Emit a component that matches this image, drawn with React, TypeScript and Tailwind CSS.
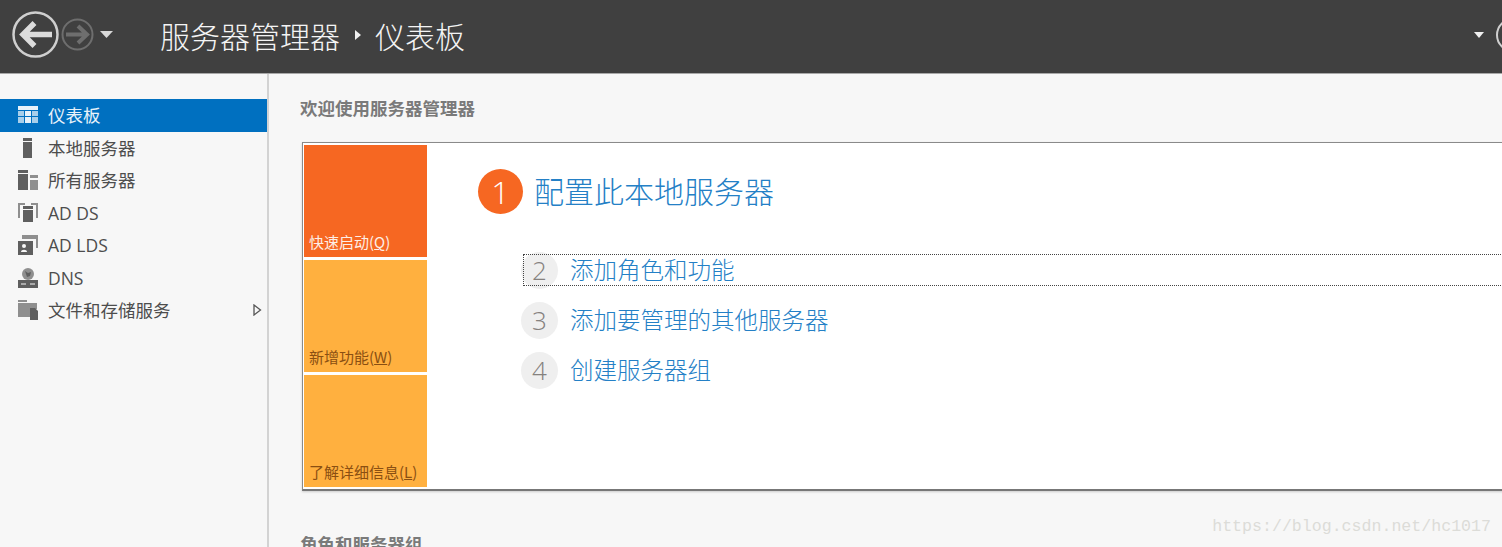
const cjk = "font-['Noto_Sans_CJK_SC','Noto_Sans',sans-serif]";

function Icon({ name }: { name: string }) {
  const c = "#5f5f5f";
  const l = "#8f8f8f";
  if (name === "dash")
    return (
      <svg width="20" height="20" viewBox="0 0 20 20">
        <rect x="0" y="1" width="20" height="4" fill="#e8f2fa" />
        <rect x="0" y="6" width="6" height="5" fill="#a9cfea" />
        <rect x="7" y="6" width="6" height="5" fill="#e8f2fa" />
        <rect x="14" y="6" width="6" height="5" fill="#a9cfea" />
        <rect x="0" y="12" width="6" height="6" fill="#a9cfea" />
        <rect x="7" y="12" width="6" height="6" fill="#e8f2fa" />
        <rect x="14" y="12" width="6" height="6" fill="#a9cfea" />
      </svg>
    );
  if (name === "local")
    return (
      <svg width="20" height="20" viewBox="0 0 20 20">
        <rect x="5" y="0" width="9" height="3" fill={c} />
        <rect x="5" y="4" width="9" height="16" fill={c} />
      </svg>
    );
  if (name === "all")
    return (
      <svg width="20" height="20" viewBox="0 0 20 20">
        <rect x="0" y="0" width="10" height="3" fill={c} />
        <rect x="0" y="4" width="10" height="16" fill={c} />
        <rect x="12" y="5" width="8" height="3" fill={l} />
        <rect x="12" y="10" width="8" height="10" fill={l} />
      </svg>
    );
  if (name === "adds")
    return (
      <svg width="20" height="21" viewBox="0 0 20 21">
        <path d="M0 1h7v2H2v13H0zM13 1h7v15h-2V3h-5z" fill={l} />
        <rect x="5" y="4" width="10" height="3" fill={c} />
        <rect x="5" y="8" width="10" height="12" fill={c} />
      </svg>
    );
  if (name === "adlds")
    return (
      <svg width="20" height="20" viewBox="0 0 20 20">
        <path d="M4 0h16v13h-2V4H4z" fill={l} />
        <rect x="0" y="6" width="15" height="14" fill={c} />
        <circle cx="6" cy="11" r="2" fill="#f7f7f7" />
        <path d="M3 17c0-3 6-3 6 0z" fill="#f7f7f7" />
      </svg>
    );
  if (name === "dns")
    return (
      <svg width="20" height="20" viewBox="0 0 20 20">
        <circle cx="10" cy="6" r="6" fill={l} />
        <path d="M7 3l3 2 3-1-1 4-3 1z" fill={c} />
        <rect x="0" y="12" width="20" height="8" fill={c} />
        <path d="M3 16h5M12 16h5" stroke="#f7f7f7" strokeWidth="1" />
      </svg>
    );
  return (
    <svg width="20" height="20" viewBox="0 0 20 20">
      <path d="M0 0h9v2H0z" fill={l} />
      <path d="M0 3h19v6h-7v8H0z" fill={l} />
      <path d="M12 8h5l3 3v9h-8z" fill={c} />
    </svg>
  );
}

const navItems = [
  { icon: "dash", label: "仪表板", active: true },
  { icon: "local", label: "本地服务器" },
  { icon: "all", label: "所有服务器" },
  { icon: "adds", label: "AD DS" },
  { icon: "adlds", label: "AD LDS" },
  { icon: "dns", label: "DNS" },
  { icon: "files", label: "文件和存储服务", arrow: true },
];

function Tile({ label, hot }: { label: [string, string]; hot?: boolean }) {
  return (
    <div
      className={`h-[112.5px] flex items-end pl-[5px] pb-[5px] text-[15px] leading-5 ${
        hot ? "bg-[#f66722] text-[#fdeee6]" : "bg-[#ffb03f] text-[#8a4f12]"
      }`}
    >
      <span>
        {label[0]}(<span className="underline">{label[1]}</span>)
      </span>
    </div>
  );
}

function Step({ n, text, focus }: { n: number; text: string; focus?: boolean }) {
  return (
    <div className="relative h-[36px] flex items-center">
      {focus && <div className="absolute left-[2px] right-0 top-[2px] h-[32px] border border-dotted border-[#444]" />}
      <div className="w-[37px] h-[37px] rounded-full bg-[#efefef] flex items-center justify-center text-[#85817e] text-[26px] shrink-0 font-['Open_Sans',sans-serif] font-light">
        {n}
      </div>
      <span className="ml-[12px] text-[23.5px] leading-none font-light text-[#2480c6]">{text}</span>
    </div>
  );
}

export default function App() {
  return (
    <div className={`relative w-[1502px] h-[547px] overflow-hidden bg-[#f7f7f7] flex flex-col ${cjk}`}>
      <header className="h-[74px] shrink-0 bg-[#404040] border-b border-[#a8a8a8] flex items-center pb-[4px]">
        <div className="flex items-center pl-[12px] w-[160px] shrink-0">
          <svg width="47" height="47" viewBox="0 0 47 47">
            <circle cx="23.5" cy="23.5" r="22" fill="none" stroke="#cfcfcf" strokeWidth="2.5" />
            <path d="M40 23.5H12M22.500 12L11 23.5 22.500 35" fill="none" stroke="#dcdcdc" strokeWidth="5.5" />
          </svg>
          <svg width="33" height="33" viewBox="0 0 33 33" className="ml-[2px]">
            <circle cx="16.5" cy="16.5" r="15" fill="none" stroke="#6e6e6e" strokeWidth="2" />
            <path d="M5 16.5h21M17 8l9 8.500-9 8.500" fill="none" stroke="#6e6e6e" strokeWidth="4" />
          </svg>
          <svg width="14" height="8" viewBox="0 0 14 8" className="ml-[6px]">
            <path d="M0 0h13L6.500 7z" fill="#d8d8d8" />
          </svg>
        </div>
        <span className="text-[30px] font-light text-[#f4f4f4] leading-none">服务器管理器</span>
        <svg width="7" height="10" viewBox="0 0 7 10" className="ml-[15px] mr-[13px]">
          <path d="M0 0l6 5-6 5z" fill="#f0f0f0" />
        </svg>
        <span className="text-[30px] font-light text-[#f4f4f4] leading-none">仪表板</span>
        <div className="flex-1" />
        <svg width="10" height="6" viewBox="0 0 10 6" className="mr-[12px]">
          <path d="M0 0h10L5 6z" fill="#f0f0f0" />
        </svg>
        <div className="w-[34px] h-[34px] -mr-[28px] rounded-full border-2 border-[#cfcfcf] shrink-0" />
      </header>

      <div className="flex flex-1 min-h-0">
        <aside className="w-[269px] shrink-0 border-r-2 border-[#d3d3d3] pt-[25px]">
          {navItems.map((it) => (
            <div
              key={it.label}
              className={`h-[32.5px] flex items-center pl-[18px] pr-[5px] text-[17.5px] ${
                it.active ? "bg-[#0070c0] text-[#e8f2fa]" : "text-[#4d4d4d]"
              }`}
            >
              <span className="w-[30px] shrink-0 flex">
                <Icon name={it.icon} />
              </span>
              <span className={`flex-1 ${/[A-Z]/.test(it.label) ? "font-['Open_Sans',sans-serif]" : ""}`}>{it.label}</span>
              {it.arrow && (
                <svg width="9" height="12" viewBox="0 0 9 12">
                  <path d="M1 1l6.500 5L1 11z" fill="none" stroke="#555" strokeWidth="1.300" />
                </svg>
              )}
            </div>
          ))}
        </aside>

        <main className="flex-1 min-w-0 pl-[31px]">
          <h2 className="mt-[21px] h-[26px] text-[17.500px] leading-[26px] font-bold text-[#7a7a7a]">欢迎使用服务器管理器</h2>
          <section className="mt-[21px] ml-[2px] w-[1300px] h-[349px] bg-white border border-[#8a8a8a] border-b-2 border-b-[#777] py-[2px] pl-[1px] flex shadow-[0_1px_2px_#ccc]">
            <div className="w-[123px] shrink-0 flex flex-col gap-[2.5px]">
              <Tile label={["快速启动", "Q"]} hot />
              <Tile label={["新增功能", "W"]} />
              <Tile label={["了解详细信息", "L"]} />
            </div>
            <div className="flex-1 pl-[51px] pt-[24px]">
              <div className="flex items-center">
                <div className="w-[45px] h-[45px] rounded-full bg-[#f66722] text-white flex items-center justify-center text-[32px] font-light font-['Open_Sans',sans-serif]">
                  1
                </div>
                <span className="ml-[11px] pb-[4px] text-[30px] leading-none font-light text-[#2480c6]">配置此本地服务器</span>
              </div>
              <div className="mt-[38px] ml-[43px] flex flex-col gap-[14px]">
                <Step n={2} text="添加角色和功能" focus />
                <Step n={3} text="添加要管理的其他服务器" />
                <Step n={4} text="创建服务器组" />
              </div>
            </div>
          </section>
          <h2 className="mt-[40px] text-[17.500px] leading-[26px] font-bold text-[#7a7a7a]">角色和服务器组</h2>
        </main>
      </div>

      <div className="absolute right-[11px] top-[515px] text-[16.600px] leading-6 text-[#dcdcd8] font-['Liberation_Mono',monospace]">
        https://blog.csdn.net/hc1017
      </div>
    </div>
  );
}
